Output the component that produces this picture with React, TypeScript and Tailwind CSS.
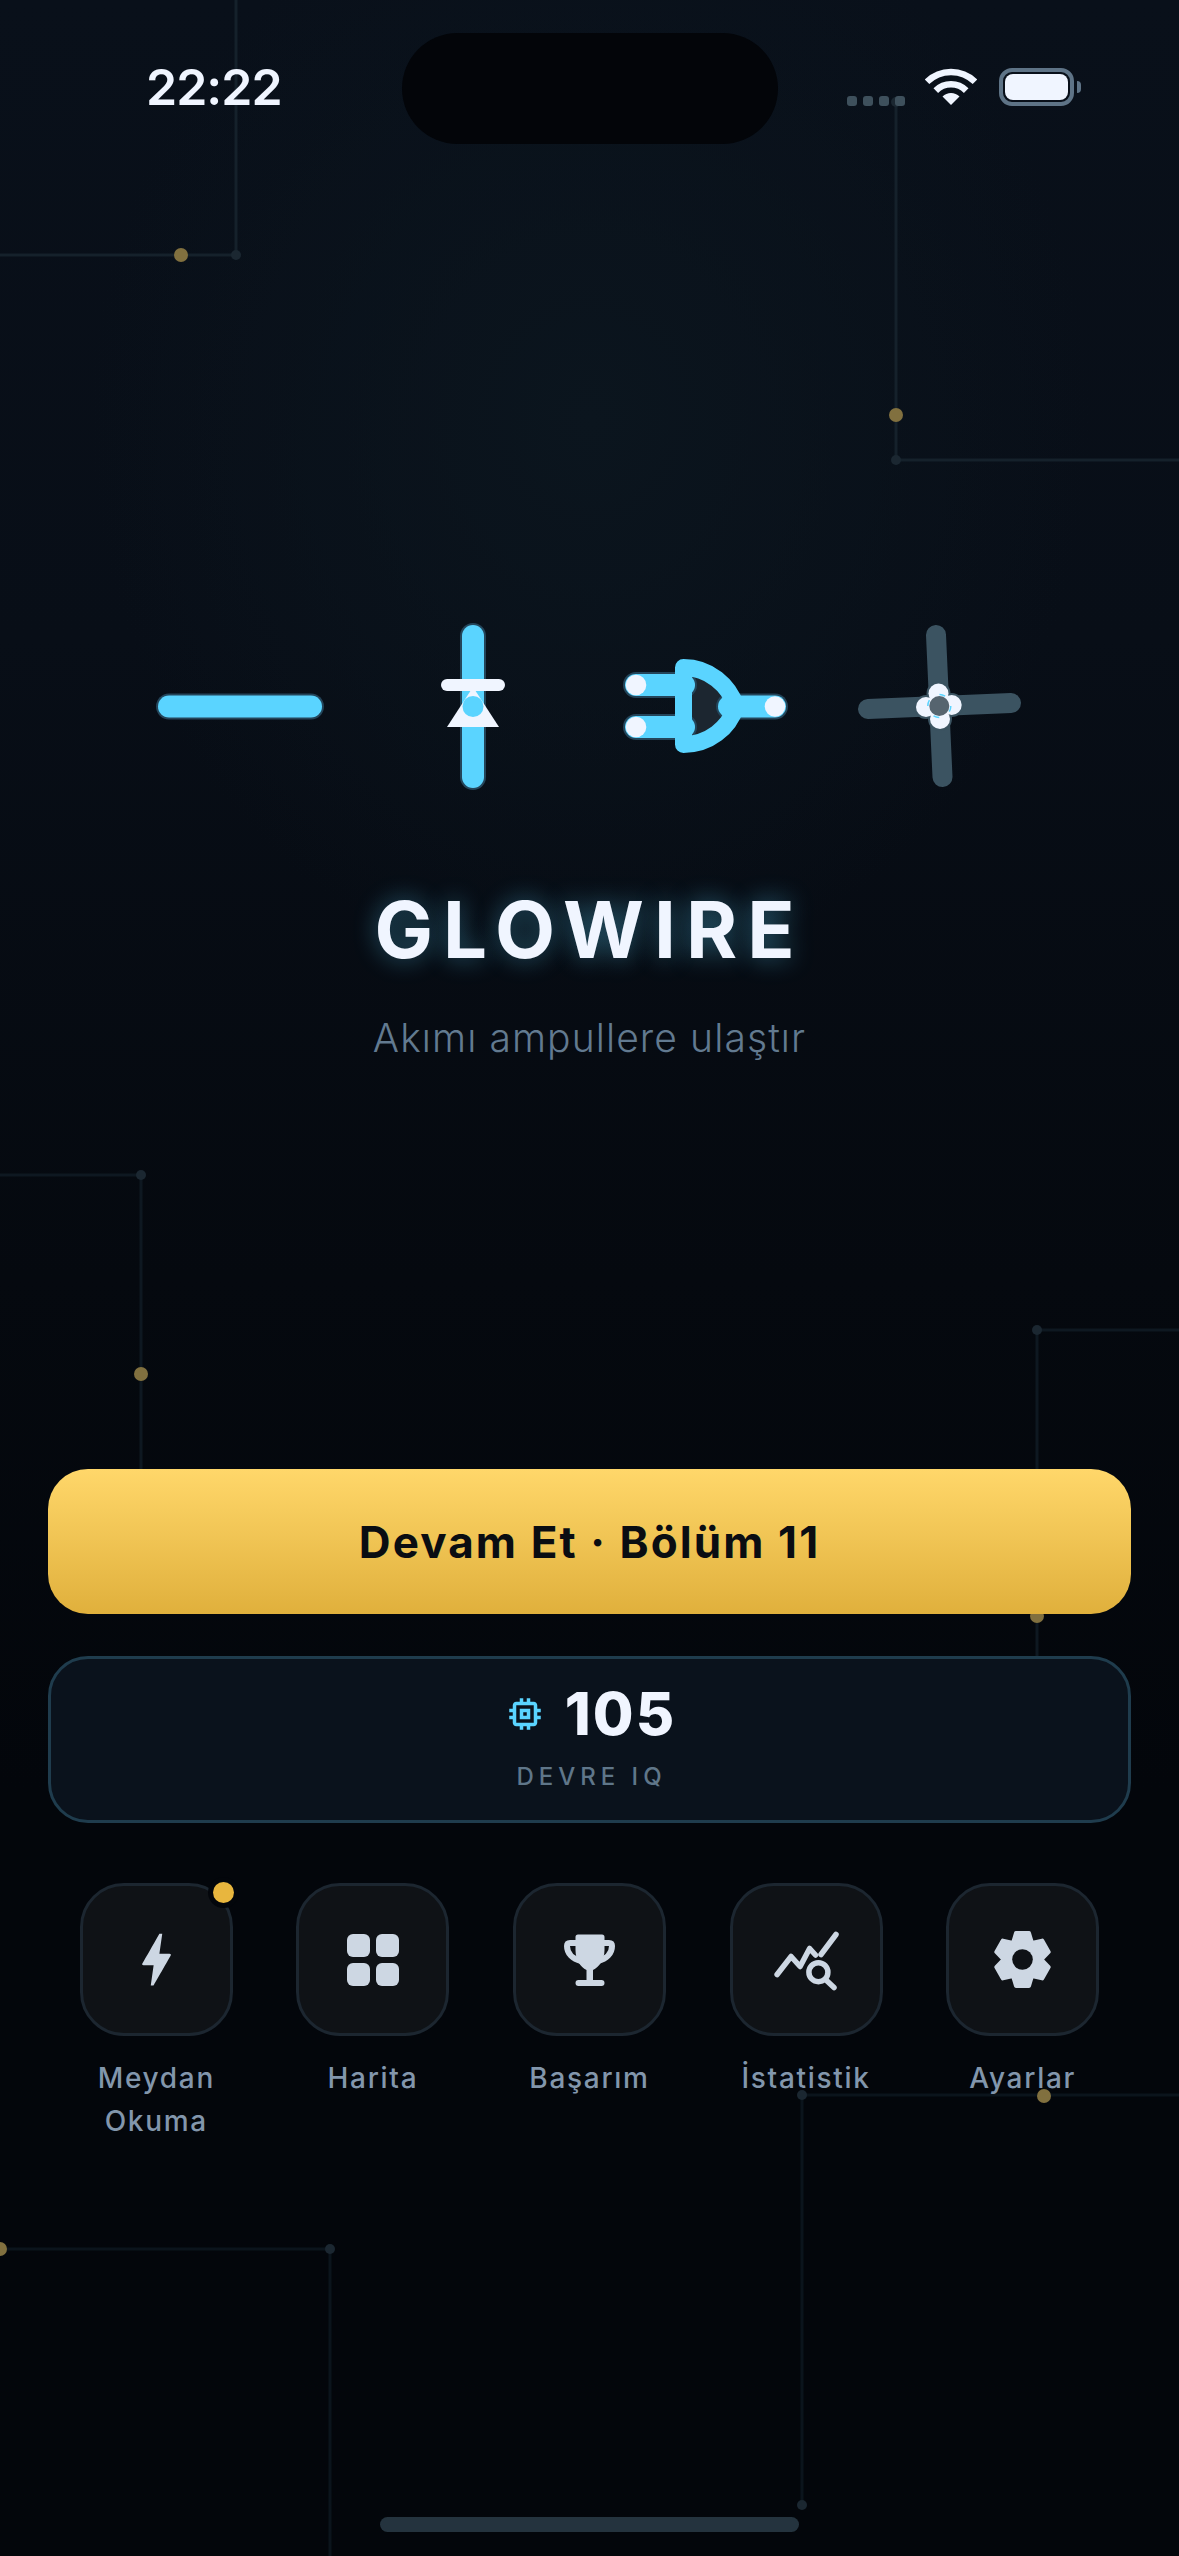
import { MdBolt, MdOutlineMemory } from 'react-icons/md'

const CYAN = '#5ad4ff'
const WHITE = '#f0f5ff'
const HALO = '#24455a'
const ICON = '#cdd7e3'

// faint circuit traces in the background: [points, gold dot, end dots]
const traces = [
  { d: 'M0 255H236V0', gold: [181, 255], nodes: [[236, 255]], color: '#15212b' },
  { d: 'M896 100V460H1179', gold: [896, 415], nodes: [[896, 460], [896, 102]], color: '#15212b' },
  { d: 'M0 1175H141V1470', gold: [141, 1374], nodes: [[141, 1175]], color: '#0e1821' },
  { d: 'M1179 1330H1037V1686', gold: [1037, 1616], nodes: [[1037, 1330], [1037, 1686]], color: '#0e1821' },
  { d: 'M1179 2095H802V2505', gold: [1044, 2096], nodes: [[802, 2095], [802, 2505]], color: '#0b141c' },
  { d: 'M0 2249H330V2556', gold: [0, 2249], nodes: [[330, 2249]], color: '#0b141c' },
]

function Traces() {
  return (
    <svg className="absolute inset-0" width="1179" height="2556" viewBox="0 0 1179 2556" fill="none">
      {traces.map((t) => (
        <g key={t.d}>
          <path d={t.d} stroke={t.color} strokeWidth="3" />
          {t.nodes.map(([x, y]) => (
            <circle key={y} cx={x} cy={y} r="5" fill="#1b2731" />
          ))}
          <circle cx={t.gold[0]} cy={t.gold[1]} r="7" fill="#81703f" />
        </g>
      ))}
    </svg>
  )
}

function Wire({ x1, y1, x2, y2 }: { x1: number; y1: number; x2: number; y2: number }) {
  return (
    <>
      <line x1={x1} y1={y1} x2={x2} y2={y2} stroke={HALO} strokeWidth="26" strokeLinecap="round" />
      <line x1={x1} y1={y1} x2={x2} y2={y2} stroke={CYAN} strokeWidth="22" strokeLinecap="round" />
    </>
  )
}

function StraightPiece() {
  return (
    <svg width="164" height="164" viewBox="0 0 164 164" className="overflow-visible">
      <circle cx="82" cy="81.5" r="12.5" fill="#3e5363" />
      <Wire x1={11} y1={81.5} x2={153} y2={81.5} />
    </svg>
  )
}

function DiodePiece() {
  return (
    <svg width="164" height="164" viewBox="0 0 164 164" className="overflow-visible">
      <Wire x1={82} y1={11} x2={82} y2={152} />
      <path d="M82 62L108 102H56Z" fill={WHITE} />
      <line x1="56" y1="60" x2="108" y2="60" stroke={WHITE} strokeWidth="12" strokeLinecap="round" />
      <circle cx="82" cy="81.5" r="10.5" fill={CYAN} />
    </svg>
  )
}

function GatePiece() {
  const body = 'M59.5 42.5C85 42.5 105 60 112 81.5C105 103 85 119.5 59.5 119.5Z'
  return (
    <svg width="164" height="164" viewBox="0 0 164 164" className="overflow-visible">
      <path d={body} fill="#1c2630" />
      <Wire x1={12} y1={60} x2={60} y2={60} />
      <Wire x1={12} y1={102} x2={60} y2={102} />
      <line x1="105" y1="81.5" x2="151" y2="81.5" stroke={HALO} strokeWidth="26" strokeLinecap="round" />
      <path d={body} fill="none" stroke={CYAN} strokeWidth="17" strokeLinejoin="round" />
      <line x1="105" y1="81.5" x2="151" y2="81.5" stroke={CYAN} strokeWidth="22" strokeLinecap="round" />
      <circle cx="12" cy="60" r="10.3" fill={WHITE} />
      <circle cx="12" cy="102" r="10.3" fill={WHITE} />
      <circle cx="151" cy="81.5" r="10.3" fill={WHITE} />
    </svg>
  )
}

function CrossPiece() {
  const lobes = [
    [81.5, 68.5],
    [83, 94],
    [69, 82],
    [94.7, 80],
  ]
  return (
    <svg width="164" height="164" viewBox="0 0 164 164" className="overflow-visible">
      <line x1="79" y1="10" x2="85.5" y2="152" stroke="#3b5361" strokeWidth="20" strokeLinecap="round" />
      <line x1="11" y1="84" x2="154" y2="78" stroke="#3b5361" strokeWidth="20" strokeLinecap="round" />
      {lobes.map(([x, y]) => (
        <circle key={x} cx={x} cy={y} r="12" fill="#3b5361" />
      ))}
      {lobes.map(([x, y]) => (
        <circle key={x} cx={x} cy={y} r="10" fill={WHITE} />
      ))}
      <circle cx="82.3" cy="81" r="11.5" fill="none" stroke={CYAN} strokeWidth="1.5" strokeDasharray="6 12" />
      <circle cx="82.3" cy="81" r="10" fill="#56646f" />
    </svg>
  )
}

function GridIcon() {
  return (
    <div className="grid grid-cols-2 gap-[6px]">
      <div className="w-[23px] h-[23px] rounded-[6px] bg-[#cdd7e3]" />
      <div className="w-[23px] h-[23px] rounded-[6px] bg-[#cdd7e3]" />
      <div className="w-[23px] h-[23px] rounded-[6px] bg-[#cdd7e3]" />
      <div className="w-[23px] h-[23px] rounded-[6px] bg-[#cdd7e3]" />
    </div>
  )
}

function TrophyIcon() {
  return (
    <svg width="69" height="69" viewBox="0 0 69 69" fill="none">
      <path d="M22 18H15Q12 18 12 21C12 29 18 34 26 36" stroke={ICON} strokeWidth="6" />
      <path d="M48 18H55Q58 18 58 21C58 29 52 34 44 36" stroke={ICON} strokeWidth="6" transform="translate(-1 0)" />
      <path
        d="M20.5 12Q20.5 9.5 23 9.5H47Q49.5 9.5 49.5 12V25C49.5 35 44 42 38 45V55H46.5Q49.5 55 49.5 58T46.5 61H23.5Q20.5 61 20.5 58T23.5 55H31.5V45C25.5 42 20.5 35 20.5 25Z"
        fill={ICON}
      />
    </svg>
  )
}

function StatsIcon() {
  return (
    <svg width="69" height="69" viewBox="0 0 69 69" fill="none" stroke={ICON} strokeWidth="5.5" strokeLinecap="round" strokeLinejoin="round">
      <path d="M5.1 49.5L19.1 31.5L28.1 41.5L37.6 23.5L43.5 30" />
      <path d="M49 29.5L64 9.5" />
      <circle cx="46.4" cy="47.2" r="9.5" />
      <path d="M54 55L62 62.5" />
    </svg>
  )
}

function gearPoints() {
  const pts: string[] = []
  for (let i = 0; i < 6; i++) {
    const a = ((-90 + 60 * i) * Math.PI) / 180
    const c = Math.cos(a)
    const s = Math.sin(a)
    pts.push(`${34.5 + 26.5 * c + 6.5 * s},${34.5 + 26.5 * s - 6.5 * c}`)
    pts.push(`${34.5 + 26.5 * c - 6.5 * s},${34.5 + 26.5 * s + 6.5 * c}`)
    const v = a + Math.PI / 6
    pts.push(`${34.5 + 19 * Math.cos(v)},${34.5 + 19 * Math.sin(v)}`)
  }
  return pts.join(' ')
}

function GearIcon() {
  return (
    <svg width="69" height="69" viewBox="0 0 69 69">
      <polygon points={gearPoints()} fill={ICON} stroke={ICON} strokeWidth="4" strokeLinejoin="round" />
      <circle cx="34.5" cy="34.5" r="10.3" fill="#0f1216" />
    </svg>
  )
}

const menu = [
  { id: 'challenge', label: 'Meydan Okuma', icon: <MdBolt size={69} color={ICON} />, badge: true },
  { id: 'map', label: 'Harita', icon: <GridIcon /> },
  { id: 'awards', label: 'Başarım', icon: <TrophyIcon /> },
  { id: 'stats', label: 'İstatistik', icon: <StatsIcon /> },
  { id: 'settings', label: 'Ayarlar', icon: <GearIcon /> },
]

export default function App() {
  return (
    <div className="relative w-[1179px] h-[2556px] overflow-hidden flex flex-col [font-family:Inter,sans-serif] bg-[radial-gradient(ellipse_500px_560px_at_590px_420px,#0b151e_0%,rgba(11,21,30,0)_100%),linear-gradient(180deg,#09101a_0%,#080e17_25%,#05090f_50%,#03060b_70%,#03060b_100%)]">
      <Traces />

      {/* Status bar */}
      <div className="relative grid grid-cols-[1fr_376px_1fr] pt-[33px] h-[144px]">
        <div className="pl-[146px] pt-[24px] text-[50px] leading-[60px] font-semibold tracking-[-1px] text-[#f0f5ff]">22:22</div>
        <div className="h-[111px] rounded-full bg-[#030509]" />
        <div className="flex items-start pl-[69px] pt-[35px]">
          <div className="flex gap-[6px] mt-[28px]">
            <div className="w-[10px] h-[10px] rounded-[3px] bg-[#3e505c]" />
            <div className="w-[10px] h-[10px] rounded-[3px] bg-[#3e505c]" />
            <div className="w-[10px] h-[10px] rounded-[3px] bg-[#3e505c]" />
            <div className="w-[10px] h-[10px] rounded-[3px] bg-[#3e505c]" />
          </div>
          <svg width="52" height="38" viewBox="0 0 52 38" fill="none" className="ml-[20px]">
            <path d="M2 13.8A34 34 0 0 1 50 13.8" stroke={WHITE} strokeWidth="6.5" />
            <path d="M10.8 22.6A21.5 21.5 0 0 1 41.2 22.6" stroke={WHITE} strokeWidth="6.5" />
            <path d="M26 37L17.5 28.5A12 12 0 0 1 34.5 28.5Z" fill={WHITE} />
          </svg>
          <div className="ml-[22px] w-[75px] h-[38px] rounded-[13px] border-[4px] border-[#5e7386] p-[2px]">
            <div className="w-full h-full rounded-[8px] bg-[#f0f5ff]" />
          </div>
          <div className="ml-[3px] mt-[13px] w-[4px] h-[12px] rounded-r-[4px] bg-[#5e7386]" />
        </div>
      </div>

      {/* Hero */}
      <div className="relative flex justify-center gap-[69px] mt-[481px]">
        <StraightPiece />
        <DiodePiece />
        <GatePiece />
        <CrossPiece />
      </div>
      <h1 className="relative mt-[102px] text-center text-[78px] leading-none font-bold tracking-[10px] text-[#f0f5ff] [text-shadow:0_0_24px_rgba(90,212,255,0.42)]">
        GLOWIRE
      </h1>
      <p className="relative mt-[49px] text-center text-[39px] leading-none font-light tracking-[1.1px] text-[#627a90]">
        Akımı ampullere ulaştır
      </p>

      {/* Actions */}
      <div className="relative mt-[412px] px-[48px] flex flex-col">
        <button className="h-[145px] rounded-[40px] bg-[linear-gradient(180deg,#ffd76a_0%,#e0b03c_100%)] text-[44px] font-bold tracking-[2.1px] text-[#0a0d12]">
          Devam Et · Bölüm 11
        </button>
        <div className="mt-[42px] h-[167px] rounded-[40px] border-[3px] border-[#1f3c4d] bg-[#0a121c] flex flex-col items-center pt-[30px]">
          <div className="flex items-center gap-[19px] ml-[1px]">
            <MdOutlineMemory size={42} color={CYAN} />
            <span className="text-[59px] leading-[50px] font-extrabold tracking-[2px] text-[#f0f5ff]">105</span>
          </div>
          <span className="mt-[23px] pl-[4px] text-[24px] leading-[30px] font-medium tracking-[5px] text-[#5f7689]">DEVRE IQ</span>
        </div>
        <div className="mt-[60px] grid grid-cols-5">
          {menu.map((item) => (
            <div key={item.id} className="flex flex-col items-center">
              <div className="relative w-[153px] h-[153px] rounded-[44px] border-[3px] border-[#1c2630] bg-[#0f1216] flex items-center justify-center">
                {item.icon}
                {item.badge && (
                  <div className="absolute -top-[9px] -right-[9px] w-[31px] h-[31px] rounded-full bg-[#03060b] flex items-center justify-center">
                    <div className="w-[21px] h-[21px] rounded-full bg-[#e8b63e]" />
                  </div>
                )}
              </div>
              <span className="mt-[21px] w-[140px] text-center text-[28px] leading-[43px] font-medium tracking-[1.7px] text-[#8296ac]">
                {item.label}
              </span>
            </div>
          ))}
        </div>
      </div>

      {/* Home indicator */}
      <div className="relative mt-auto mb-[24px] mx-auto w-[419px] h-[15px] rounded-full bg-[#24333e]" />
    </div>
  )
}
